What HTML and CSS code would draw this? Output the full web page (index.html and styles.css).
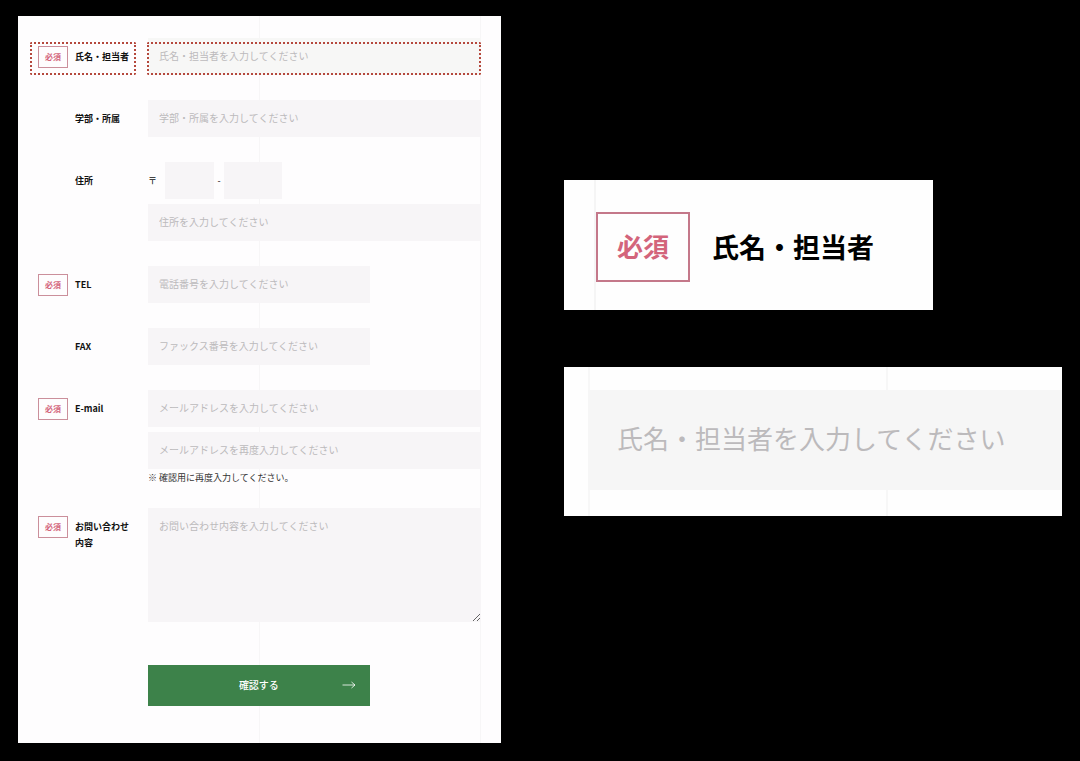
FILE: index.html
```html
<!DOCTYPE html>
<html lang="ja">

<head>
    <meta charset="UTF-8">
    <meta name="viewport" content="width=device-width, initial-scale=1">
    <title>お問い合わせ</title>
    <link rel="stylesheet" href="styles.css">
</head>
<body>
    <main class="page">
        <section class="panel">
            <form class="form">
                <div class="row">
                    <div class="head marked">
                        <span class="required">必須</span>
                        <label for="name">氏名・担当者</label>
                    </div>
                    <div class="body marked">
                        <input type="text" id="name" placeholder="氏名・担当者を入力してください">
                    </div>
                </div>
                <div class="row">
                    <div class="head">
                        <label for="dept">学部・所属</label>
                    </div>
                    <div class="body">
                        <input type="text" id="dept" placeholder="学部・所属を入力してください">
                    </div>
                </div>
                <div class="row">
                    <div class="head">
                        <label for="address">住所</label>
                    </div>
                    <div class="body">
                        <div class="zip">
                            <label for="zip1">〒</label>
                            <input type="text" id="zip1" class="zip-first">
                            <label for="zip2">-</label>
                            <input type="text" id="zip2" class="zip-last">
                        </div>
                        <input type="text" id="address" placeholder="住所を入力してください">
                    </div>
                </div>
                <div class="row">
                    <div class="head">
                        <span class="required">必須</span>
                        <label for="tel">TEL</label>
                    </div>
                    <div class="body">
                        <input type="tel" id="tel" class="short" placeholder="電話番号を入力してください">
                    </div>
                </div>
                <div class="row">
                    <div class="head">
                        <label for="fax">FAX</label>
                    </div>
                    <div class="body">
                        <input type="tel" id="fax" class="short" placeholder="ファックス番号を入力してください">
                    </div>
                </div>
                <div class="row">
                    <div class="head">
                        <span class="required">必須</span>
                        <label for="email">E-mail</label>
                    </div>
                    <div class="body">
                        <input type="email" id="email" placeholder="メールアドレスを入力してください">
                        <input type="email" id="email2" aria-labelledby="email-note" placeholder="メールアドレスを再度入力してください">
                        <p class="note" id="email-note">※ 確認用に再度入力してください。</p>
                    </div>
                </div>
                <div class="row">
                    <div class="head">
                        <span class="required">必須</span>
                        <label for="message">お問い合わせ<br>内容</label>
                    </div>
                    <div class="body">
                        <textarea id="message" placeholder="お問い合わせ内容を入力してください"></textarea>
                    </div>
                </div>
                <div class="row submit-row">
                    <button type="submit" class="submit">
                        確認する
                        <svg class="arrow" width="14" height="8" viewBox="0 0 14 8" fill="none" stroke="currentColor" stroke-width="0.8">
                            <path d="M0.5 4H13M9.5 1L13 4L9.5 7" />
                        </svg>
                    </button>
                </div>
            </form>
        </section>

        <!-- enlarged parts -->
        <section class="details">
            <div class="card label-card">
                <span class="required">必須</span>
                <label for="name-large">氏名・担当者</label>
            </div>
            <div class="card input-card">
                <input type="text" id="name-large" placeholder="氏名・担当者を入力してください">
            </div>
        </section>
    </main>
</body>

</html>
```

FILE: styles.css
```css
* {
    box-sizing: border-box;
}

body {
    margin: 0;
    background: #000;
    color: #111;
    font-family: "Noto Sans CJK JP", "Noto Sans", sans-serif;
    font-size: 9px;
    line-height: 16px;
}

input, textarea, button {
    font-family: inherit;
    border: none;
    border-radius: 0;
    outline: none;
}

.page {
    display: grid;
    grid-template-columns: 483fr 498fr;
    gap: 63px;
    padding: 16px 18px 18px;
}

/* left: the form */
.panel {
    padding: 0 20px;
    background: #fefdfe;
}

.form {
    display: flex;
    flex-direction: column;
    gap: 25px;
    padding: 22px 0 37px;
    /* thin guide lines at the middle and right edge */
    background:
        linear-gradient(#f7f6f7, #f7f6f7) 50% 0 / 1px 100% no-repeat,
        linear-gradient(#f7f6f7, #f7f6f7) 100% 0 / 1px 100% no-repeat;
}

.row {
    display: grid;
    grid-template-columns: 110px 1fr;
}

.head {
    display: grid;
    grid-template-columns: 30px 1fr;
    column-gap: 7px;
    align-items: start;
    padding-top: 8px;
    font-weight: 700;
}

.head label {
    grid-column: 2;
    padding-top: 3px;
    white-space: nowrap;
}

.required {
    display: flex;
    align-items: center;
    justify-content: center;
    height: 22px;
    border: 1px solid #cb8f9b;
    color: #d3647b;
    font-size: 8px;
    font-weight: 700;
}

.body {
    display: flex;
    flex-direction: column;
    gap: 5px;
}

.body input, .body textarea {
    display: block;
    width: 100%;
    height: 37px;
    padding: 0 11px 3px;
    background: #f7f5f7;
    color: #111;
    font-size: 10px;
}

.body.marked input {
    background: #f7f7f6;
}

.body textarea {
    height: 114px;
    padding: 10px 11px;
    line-height: 16px;
    resize: vertical;
}

.body .short {
    width: 66.6%;
}

::placeholder {
    color: #bcbabc;
    opacity: 1;
}

.zip {
    display: flex;
    align-items: center;
}

.zip label {
    flex: 0 0 17px;
}

.zip label + input + label {
    flex-basis: 10px;
    text-align: center;
}

.zip .zip-first {
    width: 49px;
}

.zip .zip-last {
    width: 58px;
}

.note {
    margin: -1px 0 0;
    color: #333;
    line-height: 10px;
}

/* dotted frames */
.marked {
    position: relative;
}

.marked::after {
    content: "";
    position: absolute;
    top: 4px;
    right: 0;
    bottom: 0;
    left: -1px;
    border: 2px dotted #b5483d;
    border-radius: 2px;
    pointer-events: none;
}

.head.marked::after {
    right: 12px;
    left: -8px;
}

.submit-row {
    margin-top: 18px;
}

.submit {
    display: flex;
    grid-column: 2;
    align-items: center;
    justify-content: center;
    position: relative;
    width: 66.6%;
    height: 41px;
    padding: 0 6px 2px;
    background: #3d824a;
    color: #fff;
    font-size: 10px;
    font-weight: 500;
    cursor: pointer;
}

.arrow {
    position: absolute;
    right: 14px;
}

/* right: enlarged label and input */
.details {
    display: flex;
    flex-direction: column;
    gap: 57px;
    padding-top: 164px;
}

.label-card {
    display: flex;
    align-items: center;
    gap: 22px;
    width: 74%;
    padding: 32px 30px 28px;
    background: linear-gradient(#f5f5f5, #f5f5f5) 30px 0 / 2px 100% no-repeat #fefefe;
    color: #000;
    font-size: 27px;
    font-weight: 700;
    line-height: 40px;
}

.label-card .required {
    width: 94px;
    height: 70px;
    margin-left: 2px;
    padding-bottom: 2px;
    border: 2px solid #c4788a;
    background: #fefefe;
    font-size: 26px;
}

.label-card label {
    white-space: nowrap;
}

.input-card {
    padding: 23px 0 26px 24px;
    background:
        linear-gradient(#f7f7f7, #f7f7f7) 24px 0 / 2px 100% no-repeat,
        linear-gradient(#f7f7f7, #f7f7f7) 65% 0 / 2px 100% no-repeat,
        #fefefe;
}

.input-card input {
    display: block;
    width: 100%;
    height: 100px;
    padding: 0 29px 5px;
    background: #f6f6f6;
    font-size: 26px;
}
```
